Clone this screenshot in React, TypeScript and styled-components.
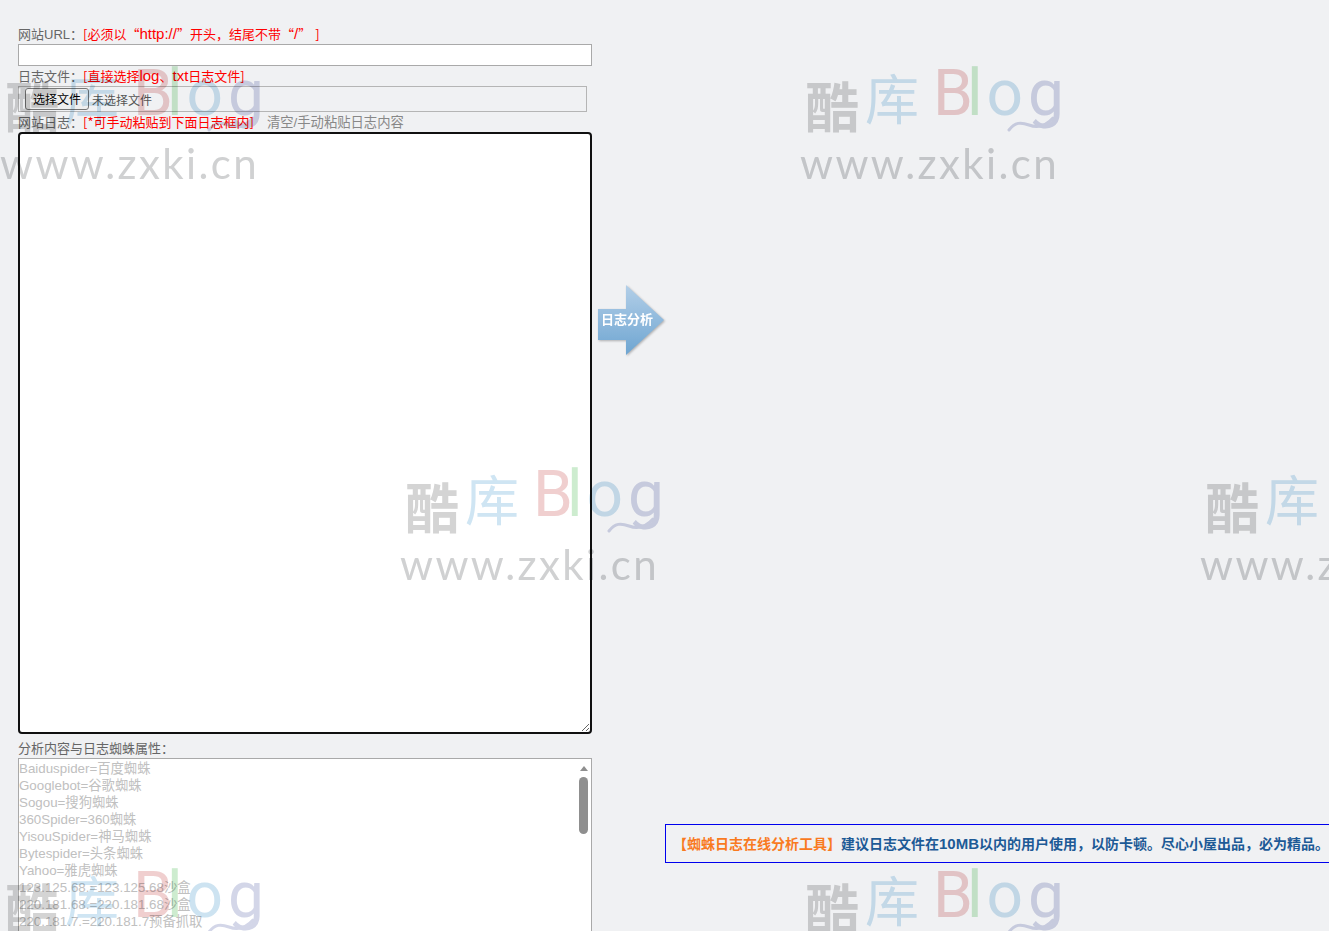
import styled, { createGlobalStyle } from "styled-components";

const uiFont = `"Liberation Sans", "Noto Sans CJK SC", sans-serif`;
const hanFont = `"Noto Sans CJK SC", "Liberation Sans", sans-serif`;

const GlobalStyle = createGlobalStyle`
  html, body {
    margin: 0;
    height: 100%;
    overflow: hidden;
    background: #f0f1f3;
  }
  body {
    font-family: ${uiFont};
    font-size: 13px;
    color: #666;
  }
`;

const Wallpaper = styled.div`
  position: fixed;
  inset: 0;
  z-index: 1;
  overflow: hidden;
  pointer-events: none;
  mix-blend-mode: multiply;
`;

const Mark = styled.div<{ $x: number; $y: number }>`
  position: absolute;
  left: ${(p) => p.$x}px;
  top: ${(p) => p.$y}px;
  width: 270px;
  filter: blur(0.6px);
`;

const MarkLogo = styled.div`
  display: flex;
  align-items: flex-start;
  height: 76px;
  font-family: "Noto Sans CJK SC", sans-serif;
`;

const MarkHan = styled.span<{ $color: string; $weight: number; $top: number; $gap: number }>`
  font-size: 54px;
  line-height: 62px;
  margin: ${(p) => p.$top}px ${(p) => p.$gap}px 0 0;
  font-weight: ${(p) => p.$weight};
  color: ${(p) => p.$color};
`;

const MarkLatin = styled.span<{ $color: string; $gap: number }>`
  font-family: Roboto, sans-serif;
  font-weight: 400;
  font-size: 64px;
  line-height: 76px;
  margin-top: -6px;
  margin-right: ${(p) => p.$gap}px;
  color: ${(p) => p.$color};
`;

const MarkWave = styled.svg`
  position: absolute;
  left: 202px;
  top: 54px;
`;

const MarkUrl = styled.div`
  font-family: Lato, sans-serif;
  font-weight: 400;
  font-size: 42px;
  line-height: 40px;
  letter-spacing: 2.4px;
  color: #d0d1d2;
  margin: 5px 0 0 -5px;
  white-space: nowrap;
`;

const Page = styled.div`
  display: flex;
  align-items: flex-start;
  padding: 26px 0 0 18px;
  width: 1311px;
`;

const FormColumn = styled.div`
  width: 574px;
  flex: none;
`;

const Label = styled.div<{ $top?: number }>`
  height: 16px;
  line-height: 16px;
  margin-top: ${(p) => p.$top ?? 0}px;
  white-space: nowrap;
  font-size: 13px;
`;

const Hint = styled.span`
  font-family: ${hanFont};
  color: #f00;
`;

const Latin = styled.span`
  font-family: "Liberation Sans", sans-serif;
  font-size: 15px;
`;

const ClearLink = styled.span`
  color: #888;
  font-size: 13.33px;
  margin-left: 13px;
`;

const UrlInput = styled.input`
  display: block;
  box-sizing: border-box;
  width: 574px;
  height: 22px;
  margin: 2px 0;
  padding: 0 2px;
  border: 1px solid #a9a9a9;
  background: #fff;
  outline: none;
`;

const FilePicker = styled.div`
  display: flex;
  align-items: center;
  box-sizing: border-box;
  width: 569px;
  height: 26px;
  margin: 2px 0;
  padding-left: 6px;
  border: 1px solid #b5b5b5;
`;

const FileButton = styled.button`
  box-sizing: border-box;
  width: 64px;
  height: 22px;
  margin-top: -1px;
  padding: 0;
  border: 1px solid #767676;
  border-radius: 3px;
  background: #efefef;
  font-family: ${uiFont};
  font-size: 12px;
  color: #000;
`;

const FileStatus = styled.span`
  margin-left: 3px;
  font-size: 12px;
  color: #555;
`;

const LogInput = styled.textarea`
  display: block;
  box-sizing: border-box;
  width: 574px;
  height: 602px;
  margin: 2px 0 0;
  padding: 2px;
  border: 2px solid #101010;
  border-radius: 4px;
  background: #fff;
  outline: none;
`;

const ResultBox = styled.div`
  position: relative;
  box-sizing: border-box;
  width: 574px;
  height: 260px;
  margin-top: 1px;
  padding-top: 1px;
  border: 1px solid #a9a9a9;
  background: #fff;
  overflow: hidden;
`;

const ResultLine = styled.div`
  height: 17px;
  line-height: 17px;
  font-size: 13.33px;
  color: #c0c0c0;
  white-space: nowrap;
`;

const ScrollArrow = styled.div`
  position: absolute;
  top: 7px;
  right: 3px;
  width: 0;
  height: 0;
  border-left: 4.5px solid transparent;
  border-right: 4.5px solid transparent;
  border-bottom: 5px solid #8f8f8f;
`;

const ScrollThumb = styled.div`
  position: absolute;
  top: 18px;
  right: 3px;
  width: 9px;
  height: 57px;
  border-radius: 5px;
  background: #8f8f8f;
`;

const AnalyzeWrap = styled.div`
  flex: none;
  margin: 259px 0 0 6px;
  filter: drop-shadow(1px 1px 1px rgba(0, 0, 0, 0.28));
`;

const AnalyzeButton = styled.button`
  display: block;
  box-sizing: border-box;
  width: 66px;
  height: 70px;
  padding: 0 0 3px 3px;
  border: none;
  background: linear-gradient(180deg, #b3cfe8 0%, #6ea5d1 100%);
  clip-path: polygon(0 24px, 28px 24px, 28px 0, 100% 50%, 28px 100%, 28px 55px, 0 55px);
  font-family: ${uiFont};
  font-size: 13px;
  font-weight: 700;
  color: #fff;
  text-align: left;
  white-space: nowrap;
`;

const Notice = styled.div`
  flex: none;
  box-sizing: border-box;
  width: 700px;
  height: 39px;
  margin: 798px 0 0 1px;
  padding: 0 0 0 7px;
  border: 1px solid #0000ee;
  border-right: none;
  line-height: 37px;
  font-size: 14px;
  font-weight: 700;
  color: #1d5a96;
  white-space: nowrap;
`;

const NoticeTitle = styled.span`
  color: #f97a1f;
`;

const markSpots = [
  [5, 62],
  [805, 62],
  [405, 463],
  [1205, 463],
  [5, 864],
  [805, 864],
];

const spiders = [
  "Baiduspider=百度蜘蛛",
  "Googlebot=谷歌蜘蛛",
  "Sogou=搜狗蜘蛛",
  "360Spider=360蜘蛛",
  "YisouSpider=神马蜘蛛",
  "Bytespider=头条蜘蛛",
  "Yahoo=雅虎蜘蛛",
  "123.125.68.=123.125.68沙盒",
  "220.181.68.=220.181.68沙盒",
  "220.181.7.=220.181.7预备抓取",
  "220.181.108.=220.181.108高权重",
  "220.181.51.=220.181.51普通",
  "180.76.=180.76普通",
  "116.179.=116.179普通",
  "119.63.=119.63普通",
];

function App() {
  return (
    <>
      <GlobalStyle />
      <Wallpaper>
        {markSpots.map(([x, y]) => (
          <Mark key={`${x}-${y}`} $x={x} $y={y}>
            <MarkLogo>
              <MarkHan $color="#d4d4d4" $weight={700} $top={12} $gap={6}>酷</MarkHan>
              <MarkHan $color="#cfe5f3" $weight={400} $top={4} $gap={14}>库</MarkHan>
              <MarkLatin $color="#f0cfcf" $gap={-6}>B</MarkLatin>
              <MarkLatin $color="#cdeccf" $gap={4}>l</MarkLatin>
              <MarkLatin $color="#cde3f1" $gap={5}>o</MarkLatin>
              <MarkLatin $color="#d3d6e8" $gap={0}>g</MarkLatin>
            </MarkLogo>
            <MarkWave width="48" height="16" viewBox="0 0 48 16">
              <path d="M2 14 C8 6 14 6 22 9 C30 12 38 11 46 2" fill="none" stroke="#d3d6e8" strokeWidth="3" strokeLinecap="round" />
            </MarkWave>
            <MarkUrl>www.zxki.cn</MarkUrl>
          </Mark>
        ))}
      </Wallpaper>
      <Page>
        <FormColumn>
          <Label>
            网站URL：<Hint>[必须以“<Latin>http://</Latin>”开头，结尾不带“<Latin>/</Latin>”<Latin>&nbsp;</Latin>]</Hint>
          </Label>
          <UrlInput />
          <Label>
            日志文件：<Hint>[直接选择<Latin>log</Latin>、<Latin>txt</Latin>日志文件]</Hint>
          </Label>
          <FilePicker>
            <FileButton type="button">选择文件</FileButton>
            <FileStatus>未选择文件</FileStatus>
          </FilePicker>
          <Label>
            网站日志：<Hint>[*可手动粘贴到下面日志框内]</Hint>
            <ClearLink>清空/手动粘贴日志内容</ClearLink>
          </Label>
          <LogInput />
          <Label $top={7}>分析内容与日志蜘蛛属性：</Label>
          <ResultBox>
            {spiders.map((line) => (
              <ResultLine key={line}>{line}</ResultLine>
            ))}
            <ScrollArrow />
            <ScrollThumb />
          </ResultBox>
        </FormColumn>
        <AnalyzeWrap>
          <AnalyzeButton type="button">日志分析</AnalyzeButton>
        </AnalyzeWrap>
        <Notice>
          <NoticeTitle>【蜘蛛日志在线分析工具】</NoticeTitle>
          建议日志文件在<Latin>10MB</Latin>以内的用户使用，以防卡顿。尽心小屋出品，必为精品。
        </Notice>
      </Page>
    </>
  );
}

export default App;
